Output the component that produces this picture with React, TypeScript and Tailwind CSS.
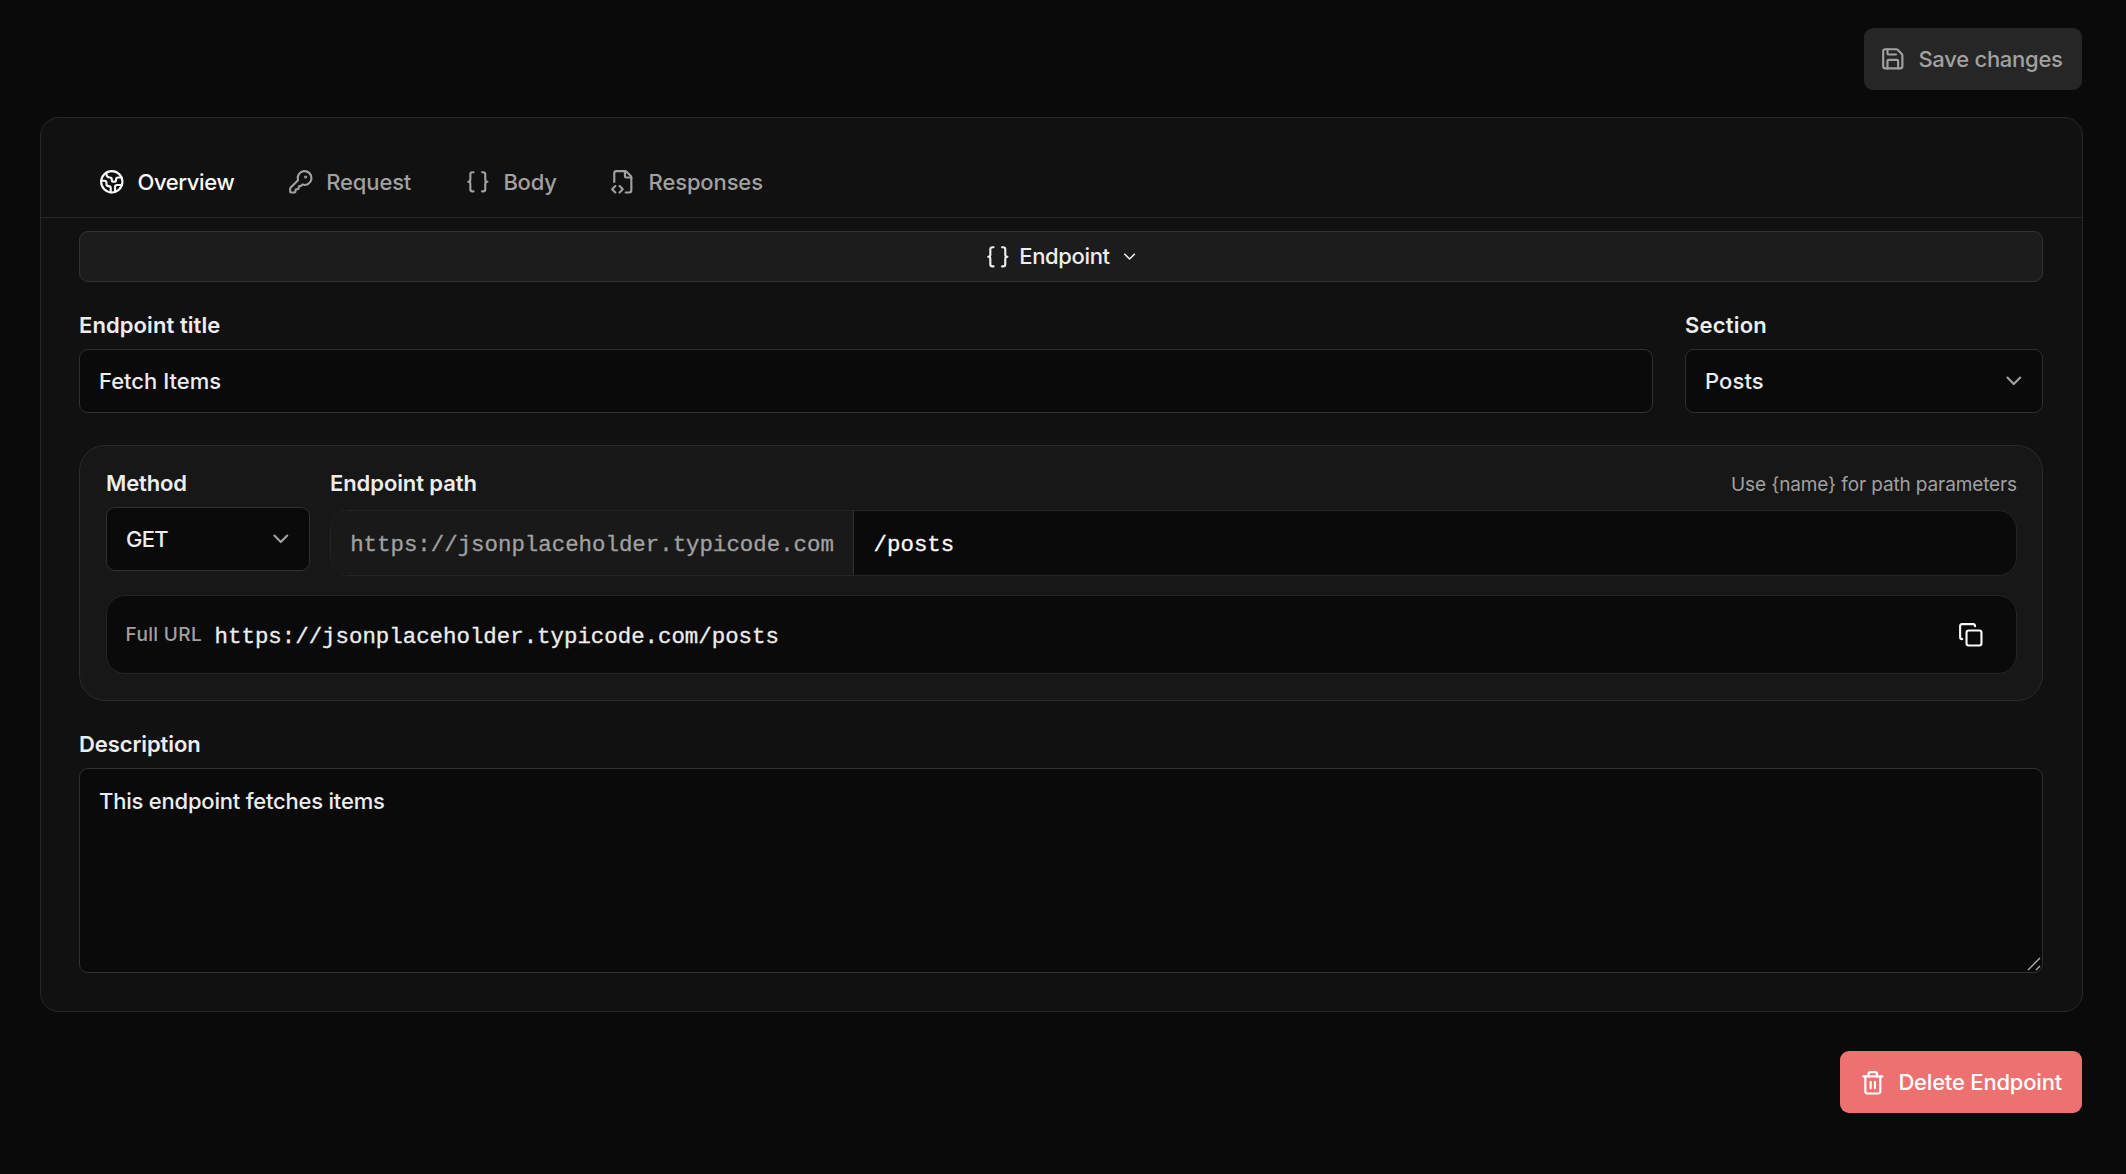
import type { ReactNode } from 'react';
import {
  Braces,
  ChevronDown,
  Copy,
  Earth,
  KeyRound,
  Save,
  Trash2,
} from 'lucide-react';

const MONO = "font-['Liberation_Mono',monospace] text-[22.4px] [-webkit-text-stroke:0.3px_currentColor]";

function FileCode({ className }: { className?: string }) {
  return (
    <svg
      viewBox="0 0 24 24"
      fill="none"
      stroke="currentColor"
      strokeWidth={2}
      strokeLinecap="round"
      strokeLinejoin="round"
      className={className}
    >
      <path d="M4 12.15V4a2 2 0 0 1 2-2h8a2.4 2.4 0 0 1 1.706.706l3.588 3.588A2.4 2.4 0 0 1 20 8v12a2 2 0 0 1-2 2h-3.35" />
      <path d="M14 2v5a1 1 0 0 0 1 1h5" />
      <path d="m5 16-3 3 3 3" />
      <path d="m9 22 3-3-3-3" />
    </svg>
  );
}

function Label({ children, className = '' }: { children: ReactNode; className?: string }) {
  return (
    <span className={`block h-[22px] text-[22px] leading-[22px] font-semibold whitespace-nowrap text-[#ededed] ${className}`}>
      {children}
    </span>
  );
}

function Select({ value, className = '' }: { value: string; className?: string }) {
  return (
    <button
      type="button"
      className={`flex h-16 w-full items-center justify-between rounded-[9px] border border-[#303030] bg-[#0a0a0a] pr-[15px] pl-[19px] text-[22px] font-[450] text-[#ededed] ${className}`}
    >
      {value}
      <ChevronDown className="size-[25.6px] text-[#a1a1a1]" />
    </button>
  );
}

export default function App() {
  return (
    <div className="h-[1174px] w-full bg-[#0a0a0a] pt-7 pr-[43px] pl-10 font-['Inter',sans-serif] text-[#ededed]">
      <div className="flex justify-end pr-px">
        <button
          type="button"
          className="flex h-[62px] w-[218px] items-center gap-[12.8px] rounded-[9px] bg-[#262626] pl-4 text-[22px] font-medium tracking-[-0.263px] whitespace-nowrap text-[#a1a1a1]"
        >
          <Save className="size-[25.6px]" />
          Save changes
        </button>
      </div>

      <main className="mt-[27px] rounded-[19px] border border-[#282828] bg-[#111111]">
        <nav className="flex h-[100px] items-center border-b border-[#282828] pt-[29px] pl-[58px] text-[22px] font-medium whitespace-nowrap text-[#a1a1a1]">
          <button type="button" className="flex w-[189.2px] items-center gap-[12.8px] tracking-[-0.373px] text-[#fafafa]">
            <Earth className="size-[25.6px]" />
            Overview
          </button>
          <button type="button" className="flex w-[176.8px] items-center gap-[12.5px] tracking-[-0.15px]">
            <KeyRound className="size-[25.6px]" />
            Request
          </button>
          <button type="button" className="flex w-[144.9px] items-center gap-[12.8px] tracking-[-0.2px]">
            <Braces className="size-[25.6px]" />
            Body
          </button>
          <button type="button" className="flex items-center gap-[13.1px] tracking-[-0.13px]">
            <FileCode className="size-[25.6px]" />
            Responses
          </button>
        </nav>

        <div className="flex flex-col gap-8 pt-[13px] pr-[39px] pb-[38px] pl-[38px]">
          <button
            type="button"
            className="flex h-[51px] items-center justify-center rounded-[9px] border border-[#333333] bg-[#1c1c1c] pl-[2px] text-[22px] font-medium tracking-[-0.352px]"
          >
            <Braces className="mr-[9px] size-[25.6px]" />
            Endpoint
            <ChevronDown className="ml-[10.5px] size-[19.2px]" />
          </button>

          <div className="flex gap-8">
            <div className="flex grow flex-col gap-[13px]">
              <Label className="tracking-[0.081px]">Endpoint title</Label>
              <input
                className="h-16 w-full rounded-[9px] border border-[#303030] bg-[#0a0a0a] px-[19px] text-[22px] font-[450] tracking-[0px] text-[#ededed] outline-none"
                defaultValue="Fetch Items"
              />
            </div>
            <div className="flex w-[358px] flex-col gap-[13px]">
              <Label className="tracking-[0.2px]">Section</Label>
              <Select value="Posts" className="tracking-[0.1px]" />
            </div>
          </div>

          <section className="flex flex-col gap-[19px] rounded-[26px] border border-[#2b2b2b] bg-[#171717] py-[26px] pr-[25px] pl-[26px]">
            <div className="flex gap-5">
              <div className="flex w-[204px] flex-col gap-[13px]">
                <Label className="tracking-[-0.135px]">Method</Label>
                <Select value="GET" className="tracking-[-0.7px]" />
              </div>
              <div className="flex grow flex-col gap-[13px]">
                <div className="flex h-[25px] items-start justify-between">
                  <Label className="tracking-[-0.09px]">Endpoint path</Label>
                  <span className="pt-px text-[19px] leading-6 tracking-[-0.12px] text-[#a1a1a1]">
                    Use {'{name}'} for path parameters
                  </span>
                </div>
                <div className="flex h-[66px] overflow-hidden rounded-[19px] border border-[#242424] bg-[#0a0a0a]">
                  <div className={`flex w-[523px] items-center border-r border-[#303030] bg-[#191919] pt-[5px] pl-[19.2px] text-[#a1a1a1] ${MONO}`}>
                    https://jsonplaceholder.typicode.com
                  </div>
                  <input
                    className={`grow bg-transparent pt-[5px] pl-[19.6px] text-[#fafafa] outline-none ${MONO}`}
                    defaultValue="/posts"
                  />
                </div>
              </div>
            </div>

            <div className="flex h-[79px] items-center rounded-[19px] border border-[#242424] bg-[#0a0a0a] pr-8 pl-[18.6px]">
              <span className="w-[89px] pt-px text-[19px] font-medium tracking-[0.328px] text-[#a1a1a1]">Full URL</span>
              <code className={`grow pt-[6px] text-[#ededed] ${MONO}`}>
                https://jsonplaceholder.typicode.com/posts
              </code>
              <Copy className="size-[25.6px] text-[#fafafa]" />
            </div>
          </section>

          <div className="flex flex-col gap-[13px]">
            <Label className="tracking-[-0.09px]">Description</Label>
            <div className="relative h-[205px]">
              <textarea
                className="block h-full w-full resize-none rounded-[9px] border border-[#303030] bg-[#0a0a0a] px-[19px] pt-4 text-[22px] leading-8 font-[450] tracking-[-0.21px] text-[#ededed] outline-none"
                defaultValue="This endpoint fetches items"
              />
              <svg viewBox="0 0 14 14" className="absolute right-[2px] bottom-[2px] size-3.5" stroke="#b0b0b0" strokeWidth={1.4}>
                <path d="M1 13 13 1M9 13l4-4" />
              </svg>
            </div>
          </div>
        </div>
      </main>

      <div className="mt-[39px] flex justify-end pr-px">
        <button
          type="button"
          className="flex h-[62px] w-[242px] items-center gap-[12.8px] rounded-[9px] bg-[#ee7172] pl-5 text-[22px] font-medium tracking-[-0.2px] whitespace-nowrap text-white"
        >
          <Trash2 className="mt-px size-[25.6px]" />
          Delete Endpoint
        </button>
      </div>
    </div>
  );
}
